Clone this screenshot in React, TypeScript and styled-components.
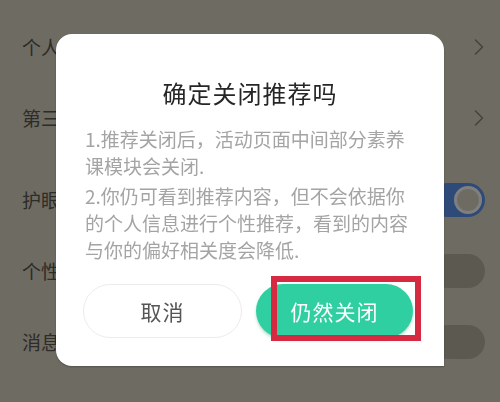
import { createGlobalStyle } from "styled-components";
import styled from "styled-components";

type Setting = {
  label: string;
  kind: "link" | "switch";
  on?: boolean;
  groupStart?: boolean;
};

const settings: Setting[] = [
  { label: "个人信息收集清单", kind: "link" },
  { label: "第三方信息共享清单", kind: "link" },
  { label: "护眼模式", kind: "switch", on: true, groupStart: true },
  { label: "个性化推荐", kind: "switch", on: false },
  { label: "消息推送", kind: "switch", on: false },
];

const Chevron = () => (
  <svg width="12" height="18" viewBox="0 0 12 18" fill="none">
    <polyline
      points="2.5,2 9.5,9 2.5,16"
      stroke="#8c877a"
      strokeWidth="1.6"
      strokeLinecap="round"
      strokeLinejoin="round"
    />
  </svg>
);

const App = () => {
  return (
    <>
      <GlobalStyle />
      <Page>
        <SettingsList>
          {settings.map((s) => (
            <Row key={s.label} $groupStart={s.groupStart}>
              <Label>{s.label}</Label>
              {s.kind === "link" ? (
                <Chevron />
              ) : (
                <Switch $on={!!s.on}>
                  <Knob $on={!!s.on} />
                </Switch>
              )}
            </Row>
          ))}
        </SettingsList>
      </Page>

      <Mask>
        <Dialog>
          <Title>确定关闭推荐吗</Title>
          <Body>
            <Para>
              <Line>1.推荐关闭后，活动页面中间部分素养</Line>
              <Line>课模块会关闭.</Line>
            </Para>
            <Para $gap>
              <Line>2.你仍可看到推荐内容，但不会依据你</Line>
              <Line>的个人信息进行个性推荐，看到的内容</Line>
              <Line>与你的偏好相关度会降低.</Line>
            </Para>
          </Body>
          <Actions>
            <Button $variant="ghost">取消</Button>
            <ConfirmWrap>
              <Button $variant="primary">仍然关闭</Button>
              <Highlight />
            </ConfirmWrap>
          </Actions>
        </Dialog>
      </Mask>
    </>
  );
};

export default App;

const GlobalStyle = createGlobalStyle`
  html, body {
    margin: 0;
    padding: 0;
    width: 500px;
    height: 402px;
    overflow: hidden;
  }
  body {
    font-family: "Noto Sans CJK SC", "Noto Sans", sans-serif;
  }
`;

const Page = styled.div`
  width: 500px;
  height: 402px;
  background: #dcd7c5;
`;

const SettingsList = styled.div`
  display: flex;
  flex-direction: column;
  padding-top: 11px;
`;

const Row = styled.div<{ $groupStart?: boolean }>`
  height: 71px;
  display: flex;
  align-items: center;
  justify-content: space-between;
  padding: 0 15px 0 22px;
  margin-top: ${(p) => (p.$groupStart ? "11px" : "0")};
`;

/* the rest of each label sits under the dialog, so it is clipped there */
const Label = styled.span`
  max-width: 42px;
  overflow: hidden;
  white-space: nowrap;
  font-size: 19px;
  color: #5a5850;
`;

const Switch = styled.div<{ $on: boolean }>`
  width: 54px;
  height: 34px;
  border-radius: 17px;
  background: ${(p) => (p.$on ? "#5c94f0" : "#b8b2a1")};
  display: flex;
  align-items: center;
  justify-content: ${(p) => (p.$on ? "flex-end" : "flex-start")};
  padding: 0 3px;
  box-sizing: border-box;
`;

const Knob = styled.div<{ $on: boolean }>`
  width: 28px;
  height: 28px;
  border-radius: 50%;
  box-sizing: border-box;
  background: ${(p) => (p.$on ? "#dcd7c5" : "#b8b2a1")};
  border: 3px solid ${(p) => (p.$on ? "#ffffff" : "#b8b2a1")};
`;

const Mask = styled.div`
  position: fixed;
  inset: 0;
  background: rgba(0, 0, 0, 0.5);
  display: flex;
  align-items: center;
  justify-content: center;
`;

const Dialog = styled.div`
  width: 388px;
  height: 332px;
  margin-top: -2px;
  box-sizing: border-box;
  background: #ffffff;
  border-radius: 16px 16px 0 16px;
  padding: 43px 0 28px;
  display: flex;
  flex-direction: column;
  box-shadow: 0 1px 2px rgba(0, 0, 0, 0.25);
`;

const Title = styled.div`
  font-size: 24px;
  line-height: 32px;
  letter-spacing: 1px;
  color: #262626;
  text-align: center;
`;

const Body = styled.div`
  margin-top: 16px;
  padding: 0 30px 0 29px;
  font-size: 19px;
  line-height: 27px;
  color: #a4a4a4;
`;

const Para = styled.div<{ $gap?: boolean }>`
  margin-top: ${(p) => (p.$gap ? "3px" : "0")};
`;

const Line = styled.span`
  display: block;
  white-space: nowrap;
`;

const Actions = styled.div`
  margin-top: auto;
  display: flex;
  gap: 14px;
  padding: 0 31px 0 27px;
`;

const ConfirmWrap = styled.div`
  position: relative;
  flex: 1;
  display: flex;
`;

const Button = styled.div<{ $variant: "ghost" | "primary" }>`
  flex: 1;
  height: 54px;
  border-radius: 27px;
  box-sizing: border-box;
  display: flex;
  align-items: center;
  justify-content: center;
  font-size: 21px;
  letter-spacing: 1px;
  ${(p) =>
    p.$variant === "primary"
      ? `
    background: #30cfa2;
    color: #ffffff;
    box-shadow: 0 2px 3px rgba(40, 160, 120, 0.35);
  `
      : `
    background: #ffffff;
    color: #555555;
    border: 1.5px solid #ececec;
  `}
`;

const Highlight = styled.div`
  position: absolute;
  left: 15px;
  right: -8px;
  top: -8px;
  bottom: -3px;
  border: 6px solid #d62a43;
  pointer-events: none;
`;
